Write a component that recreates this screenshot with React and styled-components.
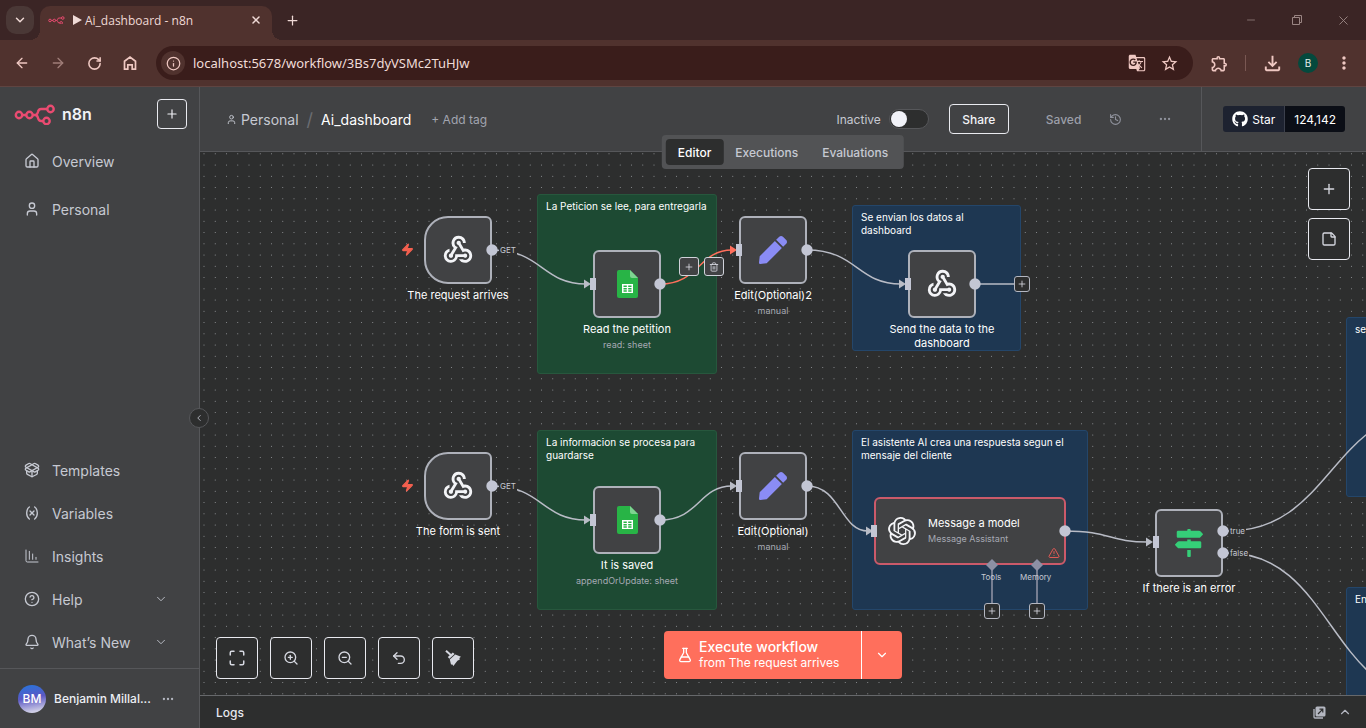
import React from 'react';
import styled, { createGlobalStyle, css } from 'styled-components';
import {
  ArrowLeft, ArrowRight, RotateCw, Info, X, Plus, ChevronDown, ChevronUp, ChevronLeft,
  House, User, PackageOpen, Variable, ChartColumnDecreasing, CircleHelp, Bell, Ellipsis,
  History, StickyNote, Maximize, ZoomIn, ZoomOut, Undo2, FlaskConical, Trash2, TriangleAlert,
  Minus, Zap,
} from 'lucide-react';
import { MdWebhook, MdGTranslate, MdStarBorder, MdOutlineExtension, MdOutlineFileDownload, MdMoreVert } from 'react-icons/md';
import { FaPen, FaMapSigns, FaGithub } from 'react-icons/fa';
import { SiOpenai } from 'react-icons/si';

const GlobalStyle = createGlobalStyle`
  *, *::before, *::after { box-sizing: border-box; }
  html, body, #root { height: 100%; }
  body { margin: 0; background: #2d2e2e; font-family: Inter, "Liberation Sans", sans-serif; color: #c6c9d2; overflow: hidden; }
  button { font: inherit; color: inherit; background: none; border: 0; padding: 0; margin: 0; cursor: pointer; }
  a { color: inherit; text-decoration: none; }
  svg { display: block; flex: none; }
`;

const Page = styled.div`
  display: flex;
  flex-direction: column;
  height: 100%;
`;

/* ---------- browser chrome ---------- */

const TabStrip = styled.div`
  display: flex;
  align-items: flex-end;
  height: 40px;
  flex: none;
  padding-left: 6px;
  background: #3b2525;
  color: #efd9d5;
  font-family: "Open Sans", "Noto Sans", sans-serif;
`;

const TabSearch = styled.button`
  display: grid;
  place-items: center;
  width: 28px;
  height: 28px;
  margin: 0 6px 6px 0;
  border-radius: 10px;
  background: #4a3836;
`;

const BrowserTab = styled.div`
  position: relative;
  display: flex;
  align-items: center;
  gap: 8px;
  width: 232px;
  height: 34px;
  padding: 0 10px 6px 8px;
  border-radius: 10px 10px 0 0;
  background: #50322e;
  font-size: 12px;
  &::before, &::after {
    content: "";
    position: absolute;
    bottom: 0;
    width: 10px;
    height: 10px;
  }
  &::before { left: -10px; background: radial-gradient(circle at 0 0, transparent 10px, #50322e 10px); }
  &::after { right: -10px; background: radial-gradient(circle at 100% 0, transparent 10px, #50322e 10px); }
`;

const TabTitle = styled.span`
  display: flex;
  align-items: center;
  gap: 3px;
  flex: 1;
  white-space: nowrap;
`;

const StripButton = styled.button`
  display: grid;
  place-items: center;
  width: 40px;
  height: 40px;
`;

const WindowControls = styled.div`
  display: flex;
  margin-left: auto;
  color: #9a8583;
  ${StripButton} { width: 46px; }
`;

const Toolbar = styled.div`
  display: flex;
  align-items: center;
  height: 47px;
  flex: none;
  padding: 0 4px;
  background: #50322e;
  border-bottom: 1px solid #5f4441;
  color: #efc8c2;
`;

const ToolButton = styled.button`
  display: grid;
  place-items: center;
  width: 36px;
  height: 36px;
  opacity: ${(p) => (p.$dim ? 0.5 : 1)};
`;

const Omnibox = styled.form`
  display: flex;
  align-items: center;
  flex: 1;
  height: 34px;
  margin: 0 8px;
  padding: 0 8px 0 5px;
  border-radius: 17px;
  background: #3a1d1b;
`;

const SiteInfo = styled.button`
  display: grid;
  place-items: center;
  width: 24px;
  height: 24px;
  border-radius: 50%;
  background: #50322e;
`;

const UrlInput = styled.input`
  flex: 1;
  min-width: 0;
  padding: 0 8px;
  border: 0;
  outline: 0;
  background: none;
  color: #f0dcd8;
  font: 13px/20px "Noto Sans", "Open Sans", sans-serif;
`;

const OmniButton = styled.button`
  display: grid;
  place-items: center;
  width: 32px;
  height: 32px;
`;

const ToolDivider = styled.span`
  width: 1px;
  height: 16px;
  margin: 0 8px;
  background: #7a5853;
`;

const ProfileBadge = styled.button`
  display: grid;
  place-items: center;
  width: 20px;
  height: 20px;
  margin: 0 8px;
  border-radius: 50%;
  background: #04493d;
  color: #e4efec;
  font-size: 10px;
`;

/* ---------- application shell ---------- */

const Workspace = styled.div`
  display: flex;
  flex: 1;
  min-height: 0;
`;

const Sidebar = styled.aside`
  position: relative;
  display: flex;
  flex-direction: column;
  width: 200px;
  flex: none;
  background: #414244;
  border-right: 1px solid #56575a;
`;

const Brand = styled.div`
  display: flex;
  align-items: center;
  gap: 6px;
  height: 54px;
  padding: 0 12px 0 14px;
  color: #f1f2f6;
  font-size: 16px;
  font-weight: 600;
`;

const AddButton = styled.button`
  display: grid;
  place-items: center;
  width: 30px;
  height: 30px;
  margin-left: auto;
  border: 1px solid #e9eaf0;
  border-radius: 4px;
`;

const Nav = styled.nav`
  display: flex;
  flex-direction: column;
  gap: ${(p) => (p.$loose ? '8px' : '3px')};
  padding-bottom: ${(p) => (p.$loose ? '0' : '6px')};
  margin-top: ${(p) => (p.$loose ? '0' : 'auto')};
`;

const NavLink = styled.a`
  display: flex;
  align-items: center;
  gap: 12px;
  height: 40px;
  padding: 0 31px 0 24px;
  font-size: 14px;
  svg:last-child:not(:first-child) { margin-left: auto; }
`;

const UserRow = styled.div`
  display: flex;
  align-items: center;
  gap: 8px;
  height: 60px;
  padding: 0 24px 0 18px;
  border-top: 1px solid #56575a;
  color: #eceef3;
  font-size: 12px;
  font-weight: 500;
`;

const Avatar = styled.span`
  display: grid;
  place-items: center;
  width: 28px;
  height: 28px;
  border-radius: 50%;
  background: linear-gradient(170deg, #3070d8 10%, #5b58c4 45%, #d0cfe6 90%);
  color: #fff;
  font-size: 12px;
`;

const UserName = styled.span`
  flex: 1;
  white-space: nowrap;
`;

const UserMenu = styled.button`
  color: #b4b7c1;
`;

const CollapseButton = styled.button`
  position: absolute;
  top: 321px;
  right: -10px;
  z-index: 3;
  display: grid;
  place-items: center;
  width: 20px;
  height: 20px;
  border: 1px solid #56575a;
  border-radius: 50%;
  background: #2d2e2e;
`;

const Main = styled.main`
  position: relative;
  display: flex;
  flex-direction: column;
  flex: 1;
  min-width: 0;
`;

const Header = styled.header`
  display: flex;
  align-items: stretch;
  height: 65px;
  flex: none;
  background: #414244;
  border-bottom: 1px solid #56575a;
`;

const Crumbs = styled.div`
  display: flex;
  align-items: center;
  padding-left: 26px;
  font-size: 14px;
  gap: 8px;
`;

const CrumbLink = styled.a`
  display: flex;
  align-items: center;
  gap: 4px;
`;

const CrumbSlash = styled.span`
  color: #6b6d72;
  font-size: 18px;
`;

const WorkflowName = styled.span`
  color: #fff;
`;

const TagButton = styled.button`
  margin-left: 12px;
  color: #a2a5b0;
  font-size: 12px;
`;

const Actions = styled.div`
  display: flex;
  align-items: center;
  margin-left: auto;
  font-size: 12px;
`;

const ActiveLabel = styled.label`
  display: flex;
  align-items: center;
  gap: 8px;
`;

const Toggle = styled.input`
  appearance: none;
  display: flex;
  align-items: center;
  width: 40px;
  height: 20px;
  margin: 0;
  border: 1px solid #56575a;
  border-radius: 10px;
  background: #2d2e2e;
  &::before {
    content: "";
    width: 16px;
    height: 16px;
    margin-left: 1px;
    border-radius: 50%;
    background: #f1f2f8;
  }
`;

const ShareButton = styled.button`
  width: 60px;
  height: 30px;
  margin-left: 20px;
  border: 1px solid #e9eaf0;
  border-radius: 4px;
  color: #f1f2f6;
  font-weight: 500;
`;

const SavedText = styled.span`
  margin-left: 37px;
  color: #9c9fa9;
  font-weight: 500;
`;

const HeaderIcon = styled.button`
  display: grid;
  place-items: center;
  width: 32px;
  height: 32px;
  margin-left: 18px;
  color: #8f929c;
`;

const StarArea = styled.div`
  display: flex;
  align-items: center;
  margin-left: 20px;
  padding: 0 21px;
  border-left: 1px solid #56575a;
`;

const StarBadge = styled.a`
  display: flex;
  height: 26px;
  border-radius: 3px;
  overflow: hidden;
  color: #fff;
  font-size: 12px;
`;

const StarLabel = styled.span`
  display: flex;
  align-items: center;
  gap: 4px;
  padding: 0 9px;
  background: #1d2230;
  border-right: 1px solid #3b3f4c;
`;

const StarCount = styled.span`
  display: flex;
  align-items: center;
  padding: 0 9px;
  background: #0b0e16;
`;

const ViewTabs = styled.div`
  position: absolute;
  top: 48px;
  left: 50%;
  transform: translateX(-50%);
  z-index: 2;
  display: flex;
  padding: 4px;
  border-radius: 4px;
  background: #525355;
`;

const ViewTab = styled.button`
  height: 26px;
  padding: 0 12px;
  border-radius: 4px;
  font-size: 12px;
  font-weight: 500;
  ${(p) => p.$active && css`background: #2d2e2e; color: #fff;`}
`;

const LogsBar = styled.footer`
  display: flex;
  align-items: center;
  gap: 12px;
  height: 33px;
  flex: none;
  padding: 0 14px 0 16px;
  border-top: 1px solid #66686b;
  background: #2d2e2e;
  color: #e6e8ee;
  font-size: 12px;
`;

const LogsTitle = styled.span`
  flex: 1;
  font-weight: 500;
`;

const LogsButton = styled.button`
  color: #b4b7c1;
`;

/* ---------- canvas ---------- */

const Canvas = styled.section`
  position: relative;
  flex: 1;
  min-height: 0;
  overflow: hidden;
  background: #2d2e2e;
`;

const Layer = styled.svg`
  position: absolute;
  inset: 0;
  width: 100%;
  height: 100%;
`;

const placed = css`
  position: absolute;
  left: ${(p) => p.$x}px;
  top: ${(p) => p.$y}px;
`;

const Sticky = styled.div`
  ${placed}
  width: ${(p) => p.$w}px;
  height: ${(p) => p.$h}px;
  padding: 5px 8px;
  border: 1px solid ${(p) => (p.$green ? '#27573d' : '#24466a')};
  border-radius: 3px;
  background: ${(p) => (p.$green ? '#1d4a33' : '#1e3752')};
  color: #fff;
  font-size: 10px;
  line-height: 13px;
`;

const NodeBox = styled.div`
  ${placed}
  display: flex;
  align-items: center;
  justify-content: center;
  gap: 12px;
  width: ${(p) => (p.$wide ? 192 : 68)}px;
  height: 68px;
  border: 2px solid ${(p) => (p.$error ? '#cb5a6a' : '#aeb1ba')};
  border-radius: ${(p) => (p.$trigger ? '24px 6px 6px 24px' : '6px')};
  background: #414244;
  color: #f3f4f7;
`;

const NodeCaption = styled.div`
  ${placed}
  display: flex;
  flex-direction: column;
  align-items: center;
  gap: 2px;
  width: 136px;
  color: #fff;
  font-size: 11px;
  line-height: 14px;
  text-align: center;
`;

const Subtitle = styled.span`
  color: #a6a9b3;
  font-size: 9px;
  line-height: 14px;
`;

const WideText = styled.div`
  display: flex;
  flex-direction: column;
  flex: 1;
  gap: 2px;
  color: #fff;
  font-size: 11px;
  line-height: 14px;
`;

const WideNode = styled(NodeBox)`
  padding-left: 12px;
`;

const ErrorMark = styled.span`
  position: absolute;
  right: 4px;
  bottom: 4px;
  color: #e05a55;
`;

const EdgeLabel = styled.span`
  ${placed}
  padding: 0 1px;
  background: ${(p) => (p.$clear ? 'none' : '#2d2e2e')};
  color: #c6c9d2;
  font-size: 8px;
  line-height: 10px;
`;

const MiniButton = styled.button`
  ${placed}
  display: grid;
  place-items: center;
  width: ${(p) => (p.$edge ? 20 : 16)}px;
  height: ${(p) => (p.$edge ? 19 : 16)}px;
  border: ${(p) => (p.$edge ? '1px solid #d0d2da' : '1px solid #b4b7c1')};
  border-radius: 3px;
  background: ${(p) => (p.$edge ? '#414244' : '#2d2e2e')};
  color: #d8dae2;
`;

const BoltMark = styled.span`
  ${placed}
  color: #f5604f;
`;

const SideTools = styled.div`
  position: absolute;
  top: 16px;
  right: 16px;
  display: flex;
  flex-direction: column;
  gap: 8px;
`;

const ZoomTools = styled.div`
  position: absolute;
  left: 16px;
  bottom: 16px;
  display: flex;
  gap: 12px;
`;

const SquareButton = styled.button`
  display: grid;
  place-items: center;
  width: 42px;
  height: 42px;
  border: 1px solid #e9eaf0;
  border-radius: 4px;
  background: #2d2e2e;
  color: #d6d8e0;
`;

const ExecuteGroup = styled.div`
  position: absolute;
  left: 50%;
  bottom: 16px;
  transform: translateX(-50%);
  display: flex;
  height: 48px;
  border-radius: 4px;
  overflow: hidden;
  background: #ff6f5c;
  color: #fff;
`;

const ExecuteButton = styled.button`
  display: flex;
  align-items: center;
  gap: 6px;
  width: 197px;
  padding-left: 13px;
  text-align: left;
`;

const ExecuteText = styled.span`
  display: flex;
  flex-direction: column;
  font-size: 14px;
  line-height: 16px;
  font-weight: 500;
  white-space: nowrap;
`;

const ExecuteSub = styled.span`
  font-size: 12px;
  font-weight: 400;
`;

const ExecuteMore = styled.button`
  display: grid;
  place-items: center;
  width: 41px;
  border-left: 1px solid #fff;
`;

/* ---------- drawings ---------- */

function N8nMark({ width }) {
  return (
    <svg width={width} height={width / 2} viewBox="0 0 42 21" fill="none" stroke="#ea4b71" strokeWidth="2.4" aria-hidden="true">
      <circle cx="5" cy="11" r="3.2" />
      <circle cx="15.5" cy="11" r="3.2" />
      <circle cx="36.5" cy="5" r="3.2" />
      <circle cx="32.5" cy="17" r="3.2" />
      <path d="M8.2 11h4.1M18.7 11h2.3c2.4 0 2.4-1.4 2.9-2.9.5-2.2 1.4-3.1 3.2-3.1h6.2M21 11c2.4 0 2.5 1.5 3 3 .5 2 1.3 3 3.2 3h2.1" />
    </svg>
  );
}

function SheetIcon() {
  return (
    <svg width="21" height="28" viewBox="0 0 21 28" aria-hidden="true">
      <path d="M2 0h11l8 8v18a2 2 0 0 1-2 2H2a2 2 0 0 1-2-2V2a2 2 0 0 1 2-2z" fill="#28b446" />
      <path d="M13 0l8 8h-6a2 2 0 0 1-2-2z" fill="#7ed491" />
      <path d="M5 14h11v9H5z" fill="#fff" />
      <path d="M6.5 15.5h3.3v1.6H6.5zM11.2 15.5h3.3v1.6h-3.3zM6.5 18h3.3v1.4H6.5zM11.2 18h3.3v1.4h-3.3zM6.5 20.3h3.3v1.4H6.5zM11.2 20.3h3.3v1.4h-3.3z" fill="#28b446" />
    </svg>
  );
}

function HomeOutline() {
  return (
    <svg width="16" height="16" viewBox="0 0 16 16" fill="none" stroke="currentColor" strokeWidth="1.7" aria-hidden="true">
      <path d="M2.5 6.2 8 2l5.5 4.2v8h-3.3V9.800H5.800v4.400H2.500z" />
    </svg>
  );
}

function BroomIcon() {
  return (
    <svg width="18" height="18" viewBox="0 0 18 18" fill="currentColor" aria-hidden="true">
      <path d="M2.6 1 7.7 5.4 6.5 6.9 1.3 2.4z" />
      <path d="M3.8 8 8.8 3.4 10.6 5 5.4 9.7z" />
      <path d="M5.8 10.4 11.3 5.5 17 7.7 15.4 9 15.8 10.4 13.4 11.8 9.4 17 8.4 15.6 7 15.4z" />
    </svg>
  );
}

function PopOutIcon() {
  return (
    <svg width="13" height="13" viewBox="0 0 13 13" aria-hidden="true">
      <path d="M1 3v8a1 1 0 0 0 1 1h8" fill="none" stroke="currentColor" strokeWidth="1.3" />
      <rect x="2.5" y="0.5" width="10" height="10" rx="1.5" fill="currentColor" />
      <path d="M5 8 9.6 3.4M6.5 3.2h3.3v3.3" fill="none" stroke="#2d2e2e" strokeWidth="1.2" />
    </svg>
  );
}

function PlayGlyph() {
  return (
    <svg width="9" height="10" viewBox="0 0 9 10" fill="currentColor" aria-hidden="true">
      <path d="M0 0l9 5-9 5z" />
    </svg>
  );
}

function RestoreGlyph() {
  return (
    <svg width="10" height="10" viewBox="0 0 10 10" fill="none" stroke="currentColor" aria-hidden="true">
      <path d="M.5 2.5h7v7h-7zM2.5 2.5v-2h7v7h-2" />
    </svg>
  );
}

function DotGrid() {
  const xs = [4, 15.25, 26.5, 37.75];
  const ys = [1.75, 13, 24.25, 35.5];
  return (
    <Layer aria-hidden="true">
      <defs>
        <pattern id="dots" width="45" height="45" patternUnits="userSpaceOnUse">
          {xs.map((x) => ys.map((y) => <circle key={`${x}-${y}`} cx={x} cy={y} r="0.5" fill="#a0a2a6" />))}
        </pattern>
      </defs>
      <rect width="100%" height="100%" fill="url(#dots)" />
    </Layer>
  );
}

function Edge({ from, to, color = '#b9bcc6', arrow = true }) {
  const mid = (from[0] + to[0]) / 2;
  const end = arrow ? to[0] - 6 : to[0];
  return (
    <g>
      <path d={`M${from[0]} ${from[1]}C${mid} ${from[1]} ${mid} ${to[1]} ${end} ${to[1]}`} fill="none" stroke={color} strokeWidth="1.5" />
      {arrow && <path d={`M${to[0] - 8} ${to[1] - 4.5}l7 4.5-7 4.5z`} fill={color} />}
    </g>
  );
}

const PORT = '#c3c6d4';

const edges = [
  { from: [292, 98], to: [392, 132] },
  { from: [460, 132], to: [538, 98], color: '#ff6f5c' },
  { from: [607, 98], to: [707, 132] },
  { from: [292, 334], to: [392, 368] },
  { from: [460, 368], to: [538, 334] },
  { from: [607, 334], to: [674, 379] },
  { from: [865, 379], to: [954, 390] },
  { from: [1028, 379], to: [1234, 259], arrow: false },
  { from: [1028, 401], to: [1234, 546], arrow: false },
];

const outputs = [[292, 98], [460, 132], [607, 98], [775, 132], [292, 334], [460, 368], [607, 334], [865, 379], [1023, 379], [1023, 401]];
const inputs = [[393, 132], [539, 98], [708, 132], [393, 368], [539, 334], [674, 379], [956, 390]];
const diamonds = [[792, 413], [837, 413]];

function Ports() {
  return (
    <Layer aria-hidden="true">
      {diamonds.map(([x, y]) => <path key={`line-${x}`} d={`M${x} ${y}V451`} stroke="#9497a8" strokeWidth="1.5" />)}
      <path d="M775 132H815" stroke="#b9bcc6" strokeWidth="1.5" />
      {outputs.map(([x, y]) => <circle key={`out-${x}-${y}`} cx={x} cy={y} r="5.7" fill={PORT} />)}
      {inputs.map(([x, y]) => <rect key={`in-${x}-${y}`} x={x - 3} y={y - 6} width="6" height="12" fill={PORT} />)}
      {diamonds.map(([x, y]) => <path key={`port-${x}`} d={`M${x - 6} ${y}l6-6 6 6-6 6z`} fill="#8d90a5" />)}
    </Layer>
  );
}

const stickies = [
  { x: 337, y: 42, w: 180, h: 180, green: true, text: 'La Peticion se lee, para entregarla' },
  { x: 652, y: 53, w: 169, h: 146, text: <>Se envian los datos al<br />dashboard</> },
  { x: 337, y: 278, w: 180, h: 180, green: true, text: <>La informacion se procesa para<br />guardarse</> },
  { x: 652, y: 278, w: 236, h: 180, text: <>El asistente AI crea una respuesta segun el<br />mensaje del cliente</> },
  { x: 1146, y: 165, w: 180, h: 180, text: 'se' },
  { x: 1146, y: 435, w: 180, h: 180, text: 'En' },
];

const hook = <MdWebhook size={34} />;
const pen = <FaPen size={28} color="#8a8cf5" />;

const nodes = [
  { x: 224, y: 64, trigger: true, icon: hook, title: 'The request arrives' },
  { x: 393, y: 98, icon: <SheetIcon />, title: 'Read the petition', sub: 'read: sheet' },
  { x: 539, y: 64, icon: pen, title: 'Edit(Optional)2', sub: 'manual' },
  { x: 708, y: 98, icon: hook, title: 'Send the data to the dashboard' },
  { x: 224, y: 300, trigger: true, icon: hook, title: 'The form is sent' },
  { x: 393, y: 334, icon: <SheetIcon />, title: 'It is saved', sub: 'appendOrUpdate: sheet' },
  { x: 539, y: 300, icon: pen, title: 'Edit(Optional)', sub: 'manual' },
  { x: 955, y: 357, icon: <FaMapSigns size={28} color="#35cf78" />, title: 'If there is an error' },
];

function WorkflowCanvas() {
  return (
    <Canvas aria-label="Workflow canvas">
      <DotGrid />
      {stickies.map((s) => (
        <Sticky key={`${s.x}-${s.y}`} $x={s.x} $y={s.y} $w={s.w} $h={s.h} $green={s.green}>{s.text}</Sticky>
      ))}
      <Layer aria-hidden="true">
        {edges.map((e) => <Edge key={`${e.from}-${e.to}`} {...e} />)}
      </Layer>
      {nodes.map((n) => (
        <React.Fragment key={n.title}>
          <NodeBox $x={n.x} $y={n.y} $trigger={n.trigger}>{n.icon}</NodeBox>
          <NodeCaption $x={n.x - 34} $y={n.y + 72}>
            {n.title}
            {n.sub && <Subtitle>{n.sub}</Subtitle>}
          </NodeCaption>
        </React.Fragment>
      ))}
      <WideNode $x={674} $y={345} $wide $error>
        <SiOpenai size={28} />
        <WideText>
          Message a model
          <Subtitle>Message Assistant</Subtitle>
        </WideText>
        <ErrorMark><TriangleAlert size={12} /></ErrorMark>
      </WideNode>
      <Ports />
      <BoltMark $x={201} $y={91}><Zap size={13} fill="currentColor" /></BoltMark>
      <BoltMark $x={201} $y={327}><Zap size={13} fill="currentColor" /></BoltMark>
      <EdgeLabel $x={299} $y={93}>GET</EdgeLabel>
      <EdgeLabel $x={299} $y={329}>GET</EdgeLabel>
      <EdgeLabel $x={1029} $y={374}>true</EdgeLabel>
      <EdgeLabel $x={1029} $y={396}>false</EdgeLabel>
      <EdgeLabel $clear $x={780} $y={420}>Tools</EdgeLabel>
      <EdgeLabel $clear $x={819} $y={420}>Memory</EdgeLabel>
      <MiniButton $edge $x={479} $y={105} aria-label="Add node here"><Plus size={10} /></MiniButton>
      <MiniButton $edge $x={504} $y={105} aria-label="Delete connection"><Trash2 size={10} /></MiniButton>
      <MiniButton $x={814} $y={124} aria-label="Add next node"><Plus size={10} /></MiniButton>
      <MiniButton $x={784} $y={451} aria-label="Add tool"><Plus size={10} /></MiniButton>
      <MiniButton $x={829} $y={451} aria-label="Add memory"><Plus size={10} /></MiniButton>

      <SideTools>
        <SquareButton aria-label="Add node"><Plus size={16} /></SquareButton>
        <SquareButton aria-label="Add sticky note"><StickyNote size={16} /></SquareButton>
      </SideTools>
      <ZoomTools>
        <SquareButton aria-label="Zoom to fit"><Maximize size={18} /></SquareButton>
        <SquareButton aria-label="Zoom in"><ZoomIn size={16} /></SquareButton>
        <SquareButton aria-label="Zoom out"><ZoomOut size={16} /></SquareButton>
        <SquareButton aria-label="Undo"><Undo2 size={16} /></SquareButton>
        <SquareButton aria-label="Tidy up"><BroomIcon /></SquareButton>
      </ZoomTools>
      <ExecuteGroup>
        <ExecuteButton>
          <FlaskConical size={16} />
          <ExecuteText>
            Execute workflow
            <ExecuteSub>from The request arrives</ExecuteSub>
          </ExecuteText>
        </ExecuteButton>
        <ExecuteMore aria-label="Choose trigger"><ChevronDown size={14} /></ExecuteMore>
      </ExecuteGroup>
    </Canvas>
  );
}

export default function App() {
  return (
    <Page>
      <GlobalStyle />
      <TabStrip>
        <TabSearch aria-label="Search tabs"><ChevronDown size={14} strokeWidth={2.5} /></TabSearch>
        <BrowserTab>
          <N8nMark width={17} />
          <TabTitle>
            <PlayGlyph />
            Ai_dashboard - n8n
          </TabTitle>
          <button aria-label="Close tab"><X size={12} strokeWidth={3} /></button>
        </BrowserTab>
        <StripButton aria-label="New tab"><Plus size={15} /></StripButton>
        <WindowControls>
          <StripButton aria-label="Minimize"><Minus size={12} strokeWidth={1.5} /></StripButton>
          <StripButton aria-label="Restore"><RestoreGlyph /></StripButton>
          <StripButton aria-label="Close window"><X size={15} strokeWidth={1.5} /></StripButton>
        </WindowControls>
      </TabStrip>
      <Toolbar>
        <ToolButton aria-label="Back"><ArrowLeft size={16} /></ToolButton>
        <ToolButton aria-label="Forward" $dim><ArrowRight size={16} /></ToolButton>
        <ToolButton aria-label="Reload"><RotateCw size={15} strokeWidth={2.5} /></ToolButton>
        <ToolButton aria-label="Home"><HomeOutline /></ToolButton>
        <Omnibox>
          <SiteInfo type="button" aria-label="Site information"><Info size={15} /></SiteInfo>
          <UrlInput aria-label="Address" defaultValue="localhost:5678/workflow/3Bs7dyVSMc2TuHJw" />
          <OmniButton type="button" aria-label="Translate"><MdGTranslate size={18} /></OmniButton>
          <OmniButton type="button" aria-label="Bookmark"><MdStarBorder size={19} /></OmniButton>
        </Omnibox>
        <ToolButton aria-label="Extensions"><MdOutlineExtension size={19} /></ToolButton>
        <ToolDivider />
        <ToolButton aria-label="Downloads"><MdOutlineFileDownload size={23} /></ToolButton>
        <ProfileBadge aria-label="Profile">B</ProfileBadge>
        <ToolButton aria-label="Menu"><MdMoreVert size={20} /></ToolButton>
      </Toolbar>

      <Workspace>
        <Sidebar>
          <Brand>
            <N8nMark width={42} />
            n8n
            <AddButton aria-label="Create"><Plus size={14} /></AddButton>
          </Brand>
          <Nav $loose>
            <NavLink href="#overview"><House size={16} />Overview</NavLink>
            <NavLink href="#personal"><User size={16} />Personal</NavLink>
          </Nav>
          <Nav>
            <NavLink href="#templates"><PackageOpen size={16} />Templates</NavLink>
            <NavLink href="#variables"><Variable size={16} />Variables</NavLink>
            <NavLink href="#insights"><ChartColumnDecreasing size={16} strokeWidth={1.5} />Insights</NavLink>
            <NavLink href="#help"><CircleHelp size={16} />Help<ChevronDown size={14} strokeWidth={1.5} /></NavLink>
            <NavLink href="#news"><Bell size={16} />What’s New<ChevronDown size={14} strokeWidth={1.5} /></NavLink>
          </Nav>
          <UserRow>
            <Avatar>BM</Avatar>
            <UserName>Benjamin Millal...</UserName>
            <UserMenu aria-label="Account menu"><Ellipsis size={14} /></UserMenu>
          </UserRow>
          <CollapseButton aria-label="Collapse sidebar"><ChevronLeft size={10} /></CollapseButton>
        </Sidebar>

        <Main>
          <Header>
            <Crumbs>
              <CrumbLink href="#personal"><User size={11} />Personal</CrumbLink>
              <CrumbSlash>/</CrumbSlash>
              <WorkflowName>Ai_dashboard</WorkflowName>
              <TagButton>+ Add tag</TagButton>
            </Crumbs>
            <Actions>
              <ActiveLabel>Inactive<Toggle type="checkbox" role="switch" /></ActiveLabel>
              <ShareButton>Share</ShareButton>
              <SavedText>Saved</SavedText>
              <HeaderIcon aria-label="History"><History size={13} /></HeaderIcon>
              <HeaderIcon aria-label="More actions"><Ellipsis size={14} /></HeaderIcon>
            </Actions>
            <StarArea>
              <StarBadge href="#star">
                <StarLabel><FaGithub size={16} />Star</StarLabel>
                <StarCount>124,142</StarCount>
              </StarBadge>
            </StarArea>
          </Header>
          <ViewTabs>
            <ViewTab $active>Editor</ViewTab>
            <ViewTab>Executions</ViewTab>
            <ViewTab>Evaluations</ViewTab>
          </ViewTabs>
          <WorkflowCanvas />
          <LogsBar>
            <LogsTitle>Logs</LogsTitle>
            <LogsButton aria-label="Pop out logs"><PopOutIcon /></LogsButton>
            <LogsButton aria-label="Open logs"><ChevronUp size={14} /></LogsButton>
          </LogsBar>
        </Main>
      </Workspace>
    </Page>
  );
}
